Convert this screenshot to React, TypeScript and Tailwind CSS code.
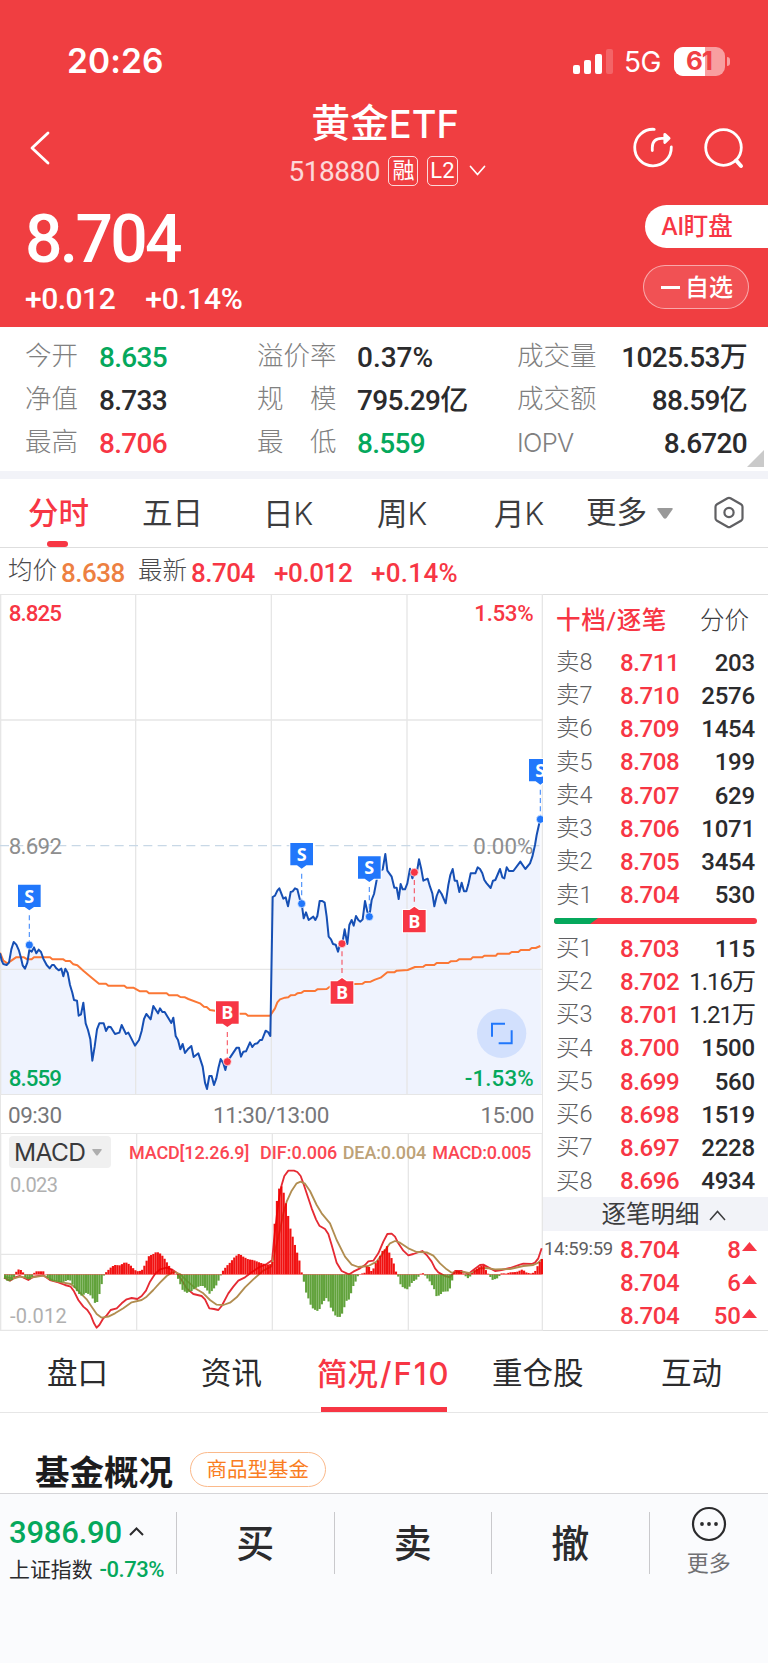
import React from 'react';
import clsx from 'clsx';

type Point = [number, number];

const RED = '#f73644';
const BLUE = '#2177fb';

// chart coordinates are in 1/3 px
const AFTERNOON_X = 780;
const MACD_AFTERNOON_X = 750;

const shift = (points: Point[], dx: number): Point[] => points.map(([x, y]) => [x + dx, y]);
const toPoints = (points: Point[]) => points.map((p) => p.join(',')).join(' ');

const parse = (data: string): Point[] =>
  data.trim().split(/\s+/).map((pair) => pair.split(',').map(Number) as Point);

const price: Point[] = [
  ...parse(`0,1090 5,1112 10,1122 20,1125 27,1118 34,1078 41,1056 49,1064 57,1082 63,1104 68,1126 75,1136 82,1118 88,1080
    95,1085 102,1072 109,1090 116,1079 123,1086 130,1106 140,1125 149,1135 156,1125 162,1125 169,1135 176,1141 184,1136
    190,1159 196,1136 203,1148 210,1185 217,1208 222,1230 231,1232 236,1277 243,1273 250,1238 257,1300 264,1320 271,1348
    277,1412 284,1370 291,1318 298,1300 311,1300 318,1323 325,1310 332,1311 345,1332 358,1328 365,1305 378,1332 385,1328
    405,1367 417,1350 425,1323 432,1287 439,1272 452,1288 460,1248 474,1270 480,1255 487,1266 494,1266 514,1299 520,1283
    527,1338 534,1350 541,1378 548,1362 555,1389 565,1376 574,1368 581,1401 595,1390 608,1430 615,1478 621,1497 628,1458
    635,1458 642,1485 649,1465 655,1435 662,1407 670,1420 676,1440 682,1415 692,1400 710,1373 717,1373 723,1400 730,1385
    738,1384 750,1357 757,1371 764,1362 772,1360 780,1350 786,1350 797,1322 804,1326 811,1338`),
  ...shift(
    parse(`38,921 45,917 52,902 58,895 70,926 77,922 84,949 92,906 98,904 105,895 112,898 120,930 125,941 131,985 138,967
      146,990 160,980 166,990 172,978 179,933 187,933 194,938 200,980 206,1040 213,1048 219,1062 227,1064 234,1085
      240,1062 247,1060 254,1018 262,1062 268,1005 275,990 281,1007 288,978 295,990 301,995 308,988 315,933 322,965
      328,980 335,930 342,912 350,870 356,845 368,838 376,792 382,842 395,860 403,893 410,893 416,927 422,882 428,898
      435,898 442,880 450,836 457,865 463,847 470,850 477,808 484,838 490,872 503,866 510,890 517,910 523,949 530,918
      537,900 545,912 557,940 565,885 571,855 578,837 584,872 591,872 598,906 605,878 612,904 619,904 625,883 632,850
      646,850 653,832 660,837 667,850 673,870 680,880 692,894 699,872 706,870 720,837 727,862 733,865 740,832 747,843
      760,843 781,815 796,837 810,820 817,800 825,765 830,735 836,708 841,688`),
    AFTERNOON_X,
  ),
];

const average: Point[] = [
  ...parse(`0,1088 10,1112 22,1120 34,1112 48,1102 72,1102 82,1108 95,1108 102,1102 150,1102 157,1108 190,1108 197,1113
    210,1113 220,1123 232,1126 250,1142 275,1163 297,1181 318,1181 325,1187 373,1187 380,1193 400,1193 420,1204 440,1204
    447,1210 500,1210 507,1216 533,1216 541,1221 555,1222 565,1227 600,1240 612,1250 620,1251 630,1260 645,1262
    720,1271 737,1271 744,1277 811,1277`),
  ...shift(
    parse(`35,1270 45,1255 52,1237 60,1228 75,1223 85,1222 92,1216 105,1215 112,1210 125,1208 132,1203 165,1203 172,1198
      200,1197 210,1190 285,1182 308,1181 315,1176 332,1175 345,1169 362,1163 382,1147 403,1147 410,1142 443,1140
      465,1131 490,1130 497,1125 523,1125 530,1119 565,1119 572,1114 590,1113 597,1108 632,1108 638,1102 667,1102
      673,1097 708,1097 713,1091 748,1091 755,1086 775,1086 782,1080 808,1080 815,1074 827,1074 841,1068`),
    AFTERNOON_X,
  ),
];

const histogram: Point[] = [
  ...parse(`12,563 20,572 30,574 40,568 46,550 52,541 58,537 64,541 70,548 76,562 86,571 95,563 100,553 106,544 118,544
    130,544 136,552 145,566 152,572 165,574 185,577 195,574 205,570 212,572 220,588 230,602 240,615 248,618 256,608
    270,614 280,628 288,645 295,628 300,605 308,570 313,553 320,545 335,530 345,525 360,526 376,516 390,524 400,535
    410,544 425,542 432,530 440,512 447,498 460,492 470,485 480,490 490,500 500,516 512,535 522,545 530,556 540,580
    548,600 560,609 575,603 585,595 600,588 610,588 620,598 628,612 640,598 650,585 660,562 667,545 680,528 690,518
    705,500 718,491 730,500 745,508 760,510 780,518 800,524 813,522`),
  ...shift(
    parse(`68,515 74,403 81,332 87,297 93,286 100,303 107,335 113,368 120,411 127,436 134,462 141,486 148,510 155,547
      162,576 169,610 176,627 183,647 190,657 203,663 210,656 217,640 229,624 237,636 243,654 250,665 257,678 268,683
      276,672 283,652 290,632 298,628 305,604 312,582 318,573 325,555 331,552 345,548 350,530 358,531 364,543 371,535
      378,518 385,510 392,495 398,482 405,478 411,468 418,488 425,505 432,522 439,548 446,562 453,588 466,596 473,598
      480,588 487,576 500,568 508,557 514,549 521,550 528,560 540,575 553,598 560,620 570,615 580,605 597,604 605,580
      611,548 620,542 632,544 640,550 648,560 656,566 665,553 672,542 690,530 700,524 710,545 718,556 727,570 745,564
      751,553 758,548 765,552 780,547 800,546 818,538 828,547 845,551 855,545 863,528 875,505`),
    MACD_AFTERNOON_X,
  ),
];

const dif: Point[] = [
  ...parse(`12,563 30,572 45,562 60,558 85,570 100,560 130,556 150,570 175,577 195,585 212,590 222,604 235,630 250,650
    262,660 272,675 282,700 290,713 298,705 310,685 320,676 332,660 350,655 365,640 380,628 395,624 412,627 425,618
    438,602 450,575 465,552 480,538 500,533 515,538 530,548 545,570 560,595 580,612 605,618 615,628 628,655 642,657
    655,660 665,648 685,610 700,590 715,572 735,562 755,547 775,533 800,522 814,512`),
  ...shift(
    parse(`66,513 72,450 80,380 88,320 95,285 103,258 115,242 132,242 142,246 152,258 160,280 170,310 185,355 198,388
      208,407 225,417 235,432 245,465 260,518 275,543 290,550 298,553 310,545 330,535 345,525 355,514 370,512 385,490
      400,455 412,432 425,431 435,440 445,460 460,482 475,496 490,492 517,483 530,495 545,515 555,535 565,547 585,558
      600,562 615,543 635,543 655,552 670,540 690,525 700,524 715,532 735,543 755,540 780,534 810,524 820,521 845,522
      855,518 865,505 875,475`),
    MACD_AFTERNOON_X,
  ),
];

const dea: Point[] = [
  ...parse(`12,560 40,566 60,560 85,564 130,557 160,572 190,578 212,582 225,592 240,608 260,628 275,650 290,672 305,683
    325,680 345,670 370,655 395,637 425,630 440,620 460,600 480,578 500,558 520,545 540,552 560,572 590,598 610,610
    630,630 650,644 670,645 690,638 710,622 735,592 760,568 790,542 813,530`),
  ...shift(
    parse(`66,522 90,420 100,370 110,335 125,302 140,280 152,275 165,281 180,303 200,345 215,370 240,400 260,450 285,500
      305,524 325,531 355,528 380,515 400,488 420,460 435,453 450,458 475,475 500,486 530,487 550,497 570,520 590,538
      605,548 640,546 665,550 690,535 710,534 735,538 780,537 820,528 850,525 865,518 875,508`),
    MACD_AFTERNOON_X,
  ),
];

const BAR_STEP = 6.74;
const ZERO = 553;

const valueAt = (points: Point[], x: number) => {
  const i = Math.max(1, points.findIndex(([px]) => px >= x));
  const [x0, y0] = points[i - 1];
  const [x1, y1] = points[i];
  return y0 + ((y1 - y0) * (x - x0)) / (x1 - x0);
};

const bars = Array.from({ length: 240 }, (_, i) => {
  const x = 12 + i * BAR_STEP;
  return { x, y: valueAt(histogram, Math.min(x + BAR_STEP / 2, 1624)) };
});

const markers = [
  { type: 'S', x: 88, box: 884, dot: 1065 },
  { type: 'B', x: 682, box: 1234, dot: 1415 },
  { type: 'S', x: 905, box: 759, dot: 941 },
  { type: 'B', x: 1026, box: 1174, dot: 1061 },
  { type: 'S', x: 1108, box: 799, dot: 980 },
  { type: 'B', x: 1243, box: 960, dot: 847 },
  { type: 'S', x: 1621, box: 507, dot: 688 },
];

const asks = [
  ['卖8', '8.711', '203'],
  ['卖7', '8.710', '2576'],
  ['卖6', '8.709', '1454'],
  ['卖5', '8.708', '199'],
  ['卖4', '8.707', '629'],
  ['卖3', '8.706', '1071'],
  ['卖2', '8.705', '3454'],
  ['卖1', '8.704', '530'],
];

const bids = [
  ['买1', '8.703', '115'],
  ['买2', '8.702', '1.16万'],
  ['买3', '8.701', '1.21万'],
  ['买4', '8.700', '1500'],
  ['买5', '8.699', '560'],
  ['买6', '8.698', '1519'],
  ['买7', '8.697', '2228'],
  ['买8', '8.696', '4934'],
];

const trades = [
  ['14:59:59', '8.704', '8'],
  ['', '8.704', '6'],
  ['', '8.704', '50'],
];

const stats = [
  { rows: [['今开', '8.635', 'text-[#05a85c]'], ['净值', '8.733', 'text-[#2b2b2d]'], ['最高', '8.706', 'text-[#f73644]']] },
  { rows: [['溢价率', '0.37%', 'text-[#2b2b2d]'], ['规　模', '795.29亿', 'text-[#2b2b2d]'], ['最　低', '8.559', 'text-[#05a85c]']] },
  { rows: [['成交量', '1025.53万', 'text-[#2b2b2d]'], ['成交额', '88.59亿', 'text-[#2b2b2d]'], ['IOPV', '8.6720', 'text-[#2b2b2d]']] },
];

const StatusBar = () => (
  <div className="flex h-[94px] items-center pt-[28px] pr-[38px] pl-[67px] text-white">
    <span className="pt-px font-['Inter',sans-serif] text-[33.500px] leading-none font-semibold tracking-[0.1px]">20:26</span>
    <svg className="ml-auto" width="40" height="25" viewBox="0 0 40 25" fill="#fff">
      <rect x="0" y="16" width="7" height="9" rx="2" />
      <rect x="11" y="11" width="7" height="14" rx="2" />
      <rect x="22" y="5" width="7" height="20" rx="2" />
      <rect x="33" y="0" width="7" height="25" rx="2" opacity="0.2" />
    </svg>
    <span className="ml-[11px] w-[39px] pt-px font-['Inter',sans-serif] text-[28px] leading-none tracking-[-0.5px]">5G</span>
    <div className="relative ml-[11px] flex h-[29px] w-[51px] items-center justify-center overflow-hidden rounded-[9px] bg-white/50">
      <div className="absolute inset-y-0 left-0 w-[31px] bg-white" />
      <span className="relative mr-px font-['Inter',sans-serif] text-[26px] leading-none font-bold tracking-[-1px] text-[#f04044]">61</span>
    </div>
    <div className="ml-[2px] h-[9px] w-[3px] rounded-r-full bg-white/50" />
  </div>
);

const TitleBar = () => (
  <div className="flex h-[106px] items-start justify-between pr-[24px] pl-[29px] text-white">
    <svg className="mt-[37px]" width="22" height="34" viewBox="0 0 22 34" fill="none" stroke="#fff" strokeWidth="2.8" strokeLinecap="round" strokeLinejoin="round">
      <path d="M19 2L3 17l16 15" />
    </svg>
    <div className="ml-[86px] flex w-[240px] flex-col items-center">
      <div className="mt-[8px] flex items-center text-[38.800px] leading-[44px] font-medium whitespace-nowrap">
        黄金<span className="font-['Inter',sans-serif] text-[38px]">ETF</span>
      </div>
      <div className="mt-[8px] ml-[5px] flex items-center gap-[8.500px]">
        <span className="pt-[2px] text-[28px] leading-[32px] tracking-[-0.5px] text-white/80">518880</span>
        <span className="flex h-[30px] w-[30px] items-center justify-center rounded-[5px] border-[1.5px] border-white/80 text-[22px] leading-none">融</span>
        <span className="flex h-[30px] w-[31px] items-center justify-center rounded-[5px] border-[1.5px] border-white/80 text-[22px] leading-none">L2</span>
        <svg className="ml-[3px]" width="17" height="12" viewBox="0 0 17 12" fill="none" stroke="#fff" strokeWidth="1.7" strokeLinecap="round" strokeLinejoin="round">
          <path d="M1.5 1.5l7 8 7-8" />
        </svg>
      </div>
    </div>
    <div className="mt-[33px] flex gap-[28px]">
      <svg width="41" height="42" viewBox="0 0 41 42" fill="none" stroke="#fff" strokeWidth="2.8" strokeLinecap="round" strokeLinejoin="round">
        <path d="M21.200 2.300A18.300 18.300 0 1 0 38.300 20" />
        <path d="M19.300 23.500v-3q0-9.200 9.500-9.200h6M31.800 7.300l4.300 3.900-4.300 4.200z" />
      </svg>
      <svg width="42" height="42" viewBox="0 0 42 42" fill="none" stroke="#fff" strokeWidth="2.8" strokeLinecap="round">
        <circle cx="21.500" cy="20.500" r="17.800" />
        <path d="M34.200 33.500l4.800 5.500" strokeWidth="4" />
      </svg>
    </div>
  </div>
);

const Quote = () => (
  <div className="flex h-[128px] justify-between pl-[25px] text-white">
    <div className="pt-[6px]">
      <div className="text-[66px] leading-[68px] font-medium tracking-[-2.7px]">8.704</div>
      <div className="mt-[7px] flex gap-[30px] text-[30px] leading-[36px] font-medium tracking-[-0.5px]">
        <span>+0.012</span>
        <span className="tracking-[-0.1px]">+0.14%</span>
      </div>
    </div>
    <div className="flex flex-col items-end gap-[17px] pt-[5px]">
      <div className="flex h-[43px] w-[123px] items-center rounded-l-full bg-white pt-px pl-[16px] text-[24.500px] leading-none font-medium text-[#f73644]">
        <span className="font-['Inter',sans-serif] text-[24px] tracking-[-0.4px]">AI</span>盯盘
      </div>
      <div className="mr-[19px] flex h-[44px] w-[106px] items-center rounded-full border-[1.5px] border-white/50 bg-white/10 pt-px pl-[17px] text-[24px] leading-none font-medium">
        <span className="mr-[5px] h-[2.500px] w-[19px] bg-white" />
        自选
      </div>
    </div>
  </div>
);

const Stats = () => (
  <div className="relative flex h-[144px] bg-white pt-[8px] pr-[21px] pl-[25px]">
    {stats.map(({ rows }, col) => (
      <div key={col} className={clsx(col === 0 && 'w-[232px]', col === 1 && 'w-[260px]', col === 2 && 'flex-1')}>
        {rows.map(([label, value, color]) => (
          <div key={label} className={clsx('flex h-[43px] items-center', col === 2 && 'justify-between')}>
            <span
              className={clsx(
                'leading-none font-light text-[#808080]',
                label === 'IOPV' ? "font-['Inter',sans-serif] text-[25.500px] tracking-[-0.7px]" : 'text-[26.500px]',
                col === 0 && 'w-[74px]',
                col === 1 && 'w-[100px]',
              )}
            >
              {label}
            </span>
            <span className={clsx('pt-[2px] text-[28px] leading-none font-medium', value.endsWith('%') ? 'tracking-[0px]' : 'tracking-[-0.7px]', color)}>
              {value}
            </span>
          </div>
        ))}
      </div>
    ))}
    <svg className="absolute right-[4px] bottom-[4px]" width="17" height="17" viewBox="0 0 17 17">
      <path d="M17 0v17H0z" fill="#cacaca" />
    </svg>
  </div>
);

const PeriodTabs = () => (
  <div className="flex h-[69px] border-b-[1.500px] border-[#dedede] bg-white pl-[28px] text-[30.500px] leading-[70px] text-[#3c3c3e]">
    <div className="relative w-[114px] font-medium text-[#f73644]">
      分时
      <span className="absolute bottom-0 left-[19px] h-[6px] w-[21px] rounded-[3px] bg-[#f73644]" />
    </div>
    <div className="w-[121px]">五日</div>
    <div className="w-[114px]">日<span className="font-['Inter',sans-serif] font-light">K</span></div>
    <div className="w-[117px]">周<span className="font-['Inter',sans-serif] font-light">K</span></div>
    <div className="w-[92px]">月<span className="font-['Inter',sans-serif] font-light">K</span></div>
    <div className="flex w-[128px] items-center">
      更多
      <svg className="ml-[10px]" width="16" height="11" viewBox="0 0 16 11">
        <path d="M1.500 0h13q2 0 1 1.500l-6 8.500q-1.500 1.500-3 0l-6-8.500q-1-1.500 1-1.500z" fill="#999" />
      </svg>
    </div>
    <svg className="mt-[17px]" width="30" height="33" viewBox="0 0 30 33" fill="none" stroke="#606063" strokeWidth="2.200" strokeLinejoin="round">
      <path d="M13.500 2.200q1.500-.8 3 0l10.500 6q1.500.9 1.500 2.600v11.400q0 1.700-1.500 2.600l-10.500 6q-1.500.8-3 0l-10.500-6q-1.500-.9-1.500-2.600V10.800q0-1.700 1.500-2.600z" />
      <circle cx="15" cy="16.500" r="4.600" />
    </svg>
  </div>
);

const PriceSummary = () => (
  <div className="flex h-[46px] items-center bg-white pt-px pl-[8px] text-[26px] leading-none font-medium tracking-[-0.5px] text-[#f73644]">
    <span className="w-[53px] text-[24.500px] font-light tracking-normal text-[#4a4a4c]">均价</span>
    <span className="w-[77px] pt-[2px] text-[#ed8041]">8.638</span>
    <span className="w-[53px] text-[24.500px] font-light tracking-normal text-[#4a4a4c]">最新</span>
    <span className="w-[83px] pt-[2px]">8.704</span>
    <span className="w-[97px] pt-[2px] tracking-[-0.4px]">+0.012</span>
    <span className="pt-[2px] tracking-[0.3px]">+0.14%</span>
  </div>
);

const Marker: React.FC<{ type: string; x: number; box: number; dot: number }> = ({ type, x, box, dot }) => {
  const color = type === 'S' ? BLUE : RED;
  const above = box < dot;
  const edge = above ? box + 67 : box;
  const tip = above ? edge + 10 : edge - 10;

  return (
    <g>
      <line x1={x} x2={x} y1={above ? tip + 15 : tip - 15} y2={dot} stroke={color} strokeWidth="3.500" strokeDasharray="15 10" opacity="0.8" />
      <path
        d={`M${x - 34} ${box}h68v67h-68zM${x - 14} ${edge}L${x} ${tip}L${x + 14} ${edge}z`}
        fill={color}
        stroke="#fff"
        strokeWidth="6"
        paintOrder="stroke"
      />
      <circle cx={x} cy={dot} r="12" fill={color} stroke="#fff" strokeWidth="2" />
      <text x={x} y={box + 54} textAnchor="middle" fontSize="54" fontWeight="700" fill="#fff" className="font-['Open_Sans',sans-serif]">
        {type}
      </text>
    </g>
  );
};

const PriceChart = () => (
  <svg className="block" width="543" height="501" viewBox="0 12 1629 1503">
    <polygon points={`0,1515 ${toPoints(price)} 1623,1515`} fill="#eff3fe" />
    <g stroke="#e6e6e6" strokeWidth="4">
      <path d="M2 12V1515M407 12V1515M814 12V1515M1221 12V1515M1627 12V1515" />
      <path d="M0 13H1629M0 390H1629M0 1138H1629M0 1514H1629" />
    </g>
    <path d="M0 767H1629" stroke="#c8d8e6" strokeWidth="4" strokeDasharray="27 16" />
    <g fontSize="67" className="font-['Roboto',sans-serif]">
      <text x="26" y="93" fill={RED} textLength="160" className="font-medium">8.825</text>
      <text x="1423" y="93" fill={RED} textLength="178" className="font-medium">1.53%</text>
      <text x="26" y="791" fill="#8e8e8e" textLength="160">8.692</text>
      <text x="1420" y="791" fill="#8e8e8e" textLength="180">0.00%</text>
      <text x="26" y="1487" fill="#05a85c" textLength="160" className="font-medium">8.559</text>
      <text x="1394" y="1487" fill="#05a85c" textLength="207" className="font-medium">-1.53%</text>
    </g>
    <polyline points={toPoints(average)} fill="none" stroke="#fb7735" strokeWidth="6" strokeLinejoin="round" />
    <polyline points={toPoints(price)} fill="none" stroke="#164fb4" strokeWidth="6" strokeLinejoin="round" />
    {markers.map((m) => (
      <Marker key={m.x} {...m} />
    ))}
    <circle cx="1505" cy="1330" r="74" fill="#d2e0fd" />
    <path d="M1515 1301h-39v39M1496 1360h39v-39" fill="none" stroke={BLUE} strokeWidth="6" />
  </svg>
);

const TimeAxis = () => (
  <div className="flex h-[38px] items-center justify-between border-x-[1.500px] border-[#e6e6e6] pt-[2px] pr-[8px] pl-[7px] text-[22.500px] leading-none tracking-[-0.5px] text-[#77777a]">
    <span>09:30</span>
    <span>11:30/13:00</span>
    <span>15:00</span>
  </div>
);

const MacdChart = () => (
  <div className="relative h-[198px]">
    <svg className="block" width="543" height="198" viewBox="0 129 1629 594">
      <g stroke="#e6e6e6" strokeWidth="4" fill="none">
        <path d="M2 129V723M410 129V723M817 129V723M1225 129V723M1627 129V723M0 130H1629M0 493H1629M0 721H1629" />
      </g>
      <g fontSize="60" className="font-['Roboto',sans-serif]">
        <text x="30" y="305" fill="#b0b0b0" textLength="144">0.023</text>
        <text x="30" y="698" fill="#b0b0b0" textLength="170">-0.012</text>
      </g>
      <g fontSize="54" className="font-['Roboto',sans-serif] font-medium" fill="#fb4652">
        <text x="387" y="208" textLength="361">MACD[12.26.9]</text>
        <text x="780" y="208" textLength="232">DIF:0.006</text>
        <text x="1028" y="208" fill="#bda277" textLength="251">DEA:0.004</text>
        <text x="1297" y="208" textLength="297">MACD:0.005</text>
      </g>
      <polyline points={toPoints(dif)} fill="none" stroke="#e52a33" strokeWidth="5.500" strokeLinejoin="round" />
      <polyline points={toPoints(dea)} fill="none" stroke="#b18d50" strokeWidth="5.500" strokeLinejoin="round" />
      {bars.map(({ x, y }) => (
        <rect
          key={x}
          x={x}
          y={Math.min(y, ZERO)}
          width="6.500"
          height={Math.abs(y - ZERO)}
          fill={y < ZERO ? '#f00000' : '#559b2c'}
          opacity="0.93"
        />
      ))}
      <path d={`M12 ${ZERO}H1625`} stroke="#f00000" strokeWidth="2" opacity="0.6" />
    </svg>
    <div className="absolute top-[3px] left-[9px] flex h-[32px] w-[102px] items-center rounded-[4px] bg-[#f0f0f0] pl-[5px] font-['Inter',sans-serif] text-[24.500px] leading-none tracking-[-0.6px] text-[#3a3a3c]">
      MACD
      <svg className="ml-auto mr-[9px]" width="10" height="7" viewBox="0 0 10 7">
        <path d="M1 0h8q1.500 0 .5 1.200l-3.500 4.800q-1 1-2 0L.5 1.200Q-.5 0 1 0z" fill="#aeaeae" />
      </svg>
    </div>
  </div>
);

const OrderRow: React.FC<{ row: string[] }> = ({ row: [label, level, volume] }) => (
  <div className="flex h-[33.250px] shrink-0 items-center pr-[13px] pl-[13px] text-[24px] leading-none font-medium">
    <span className="w-[64px] text-[23.500px] font-light text-[#5f5f62]">{label}</span>
    <span className="tracking-[-0.4px] text-[#f73644]">{level}</span>
    <span className={clsx('ml-auto text-[#2b2b2d]', volume.endsWith('万') ? 'font-normal tracking-[-1px]' : 'tracking-[-0.2px]')}>{volume}</span>
  </div>
);

const OrderBook = () => (
  <div className="flex flex-1 flex-col overflow-hidden border-t-[1.500px] border-b-[1.500px] border-[#dedede]">
    <div className="flex h-[51px] shrink-0 items-center justify-between pt-px pr-[19px] pl-[13px] text-[24.500px] leading-none">
      <span className="font-medium tracking-[0.7px] text-[#f73644]">十档/逐笔</span>
      <span className="font-light text-[#3c3c3e]">分价</span>
    </div>
    {asks.map((row) => (
      <OrderRow key={row[0]} row={row} />
    ))}
    <div className="flex h-[20px] shrink-0 items-center px-[11px] pb-[2px]">
      <svg width="203" height="6" viewBox="0 0 203 6">
        <rect width="203" height="6" rx="3" fill={RED} />
        <path d="M3 0h41l-8 6H3a3 3 0 0 1 0-6z" fill="#05a85c" />
      </svg>
    </div>
    {bids.map((row) => (
      <OrderRow key={row[0]} row={row} />
    ))}
    <div className="-mt-px flex h-[34px] shrink-0 items-center justify-center bg-[#f2f3f8] pt-[2px] pl-[16px] text-[24.500px] leading-none text-[#3c3c3e]">
      逐笔明细
      <svg className="ml-[9px]" width="17" height="11" viewBox="0 0 17 11" fill="none" stroke="#3c3c3e" strokeWidth="1.500">
        <path d="M1 10l7.500-8.500L16 10" />
      </svg>
    </div>
    <div className="h-[98px] shrink-0 pt-[2px]">
      {trades.map(([time, level, volume], i) => (
        <div key={i} className="flex h-[33.250px] items-center pr-[11px] text-[24px] leading-none font-medium text-[#f73644]">
          <span className="w-[77px] pl-[1px] text-[18.500px] font-normal tracking-[-0.3px] text-[#5f5f62]">{time}</span>
          <span className="tracking-[-0.4px]">{level}</span>
          <span className="ml-auto">{volume}</span>
          <svg className="mb-[6px] ml-[1px]" width="15" height="9" viewBox="0 0 15 9">
            <path d="M7.500 0L15 9H0z" fill={RED} />
          </svg>
        </div>
      ))}
    </div>
  </div>
);

const SectionTabs = () => (
  <div className="flex h-[82px] border-b-[1.500px] border-[#e6e6e6] bg-white pl-[47px] text-[30.500px] leading-[85px] text-[#2b2b2d]">
    <div className="w-[154px]">盘口</div>
    <div className="w-[116px]">资讯</div>
    <div className="relative w-[175px] font-medium whitespace-nowrap text-[#f73644]">
      简况<span className="ml-[2px] font-['Inter',sans-serif] text-[31px] tracking-[2px]">/F10</span>
      <span className="absolute bottom-0 left-[4px] h-[5px] w-[126px] bg-[#f73644]" />
    </div>
    <div className="w-[169px]">重仓股</div>
    <div>互动</div>
  </div>
);

const BottomBar = () => (
  <div className="flex h-[170px] border-t-[1.500px] border-[#d5d5d8] bg-[#fafbfd] pt-[18px]">
    <div className="w-[176px] pl-[9px]">
      <div className="mt-[3px] flex items-center gap-[7px] text-[31px] leading-[36px] tracking-[-0.2px] text-[#05a85c]">
        <span className="font-medium">3986.90</span>
        <svg className="mb-[4px]" width="15" height="9" viewBox="0 0 15 9" fill="none" stroke="#2b2b2d" strokeWidth="2">
          <path d="M1 8l6.500-6.500L14 8" />
        </svg>
      </div>
      <div className="mt-[4px] flex items-center gap-[7px] text-[20.900px] leading-[28px] whitespace-nowrap text-[#2b2b2d]">
        上证指数
        <span className="pt-[1px] text-[22px] font-medium tracking-[-0.5px] text-[#05a85c]">-0.73%</span>
      </div>
    </div>
    {['买', '卖', '撤'].map((action) => (
      <div key={action} className="flex h-[62px] w-[157.500px] items-center justify-center border-l-[1.500px] border-[#c9c9cc] pt-[2px] text-[38px] leading-none font-medium text-[#2b2b2d]">
        {action}
      </div>
    ))}
    <div className="flex h-[62px] flex-1 flex-col items-center border-l-[1.500px] border-[#c9c9cc]">
      <svg className="mt-[-6px] shrink-0" width="36" height="36" viewBox="0 0 36 36">
        <circle cx="18" cy="18" r="16" fill="none" stroke="#2b2b2d" strokeWidth="2.200" />
        <circle cx="11" cy="18" r="1.900" fill="#2b2b2d" />
        <circle cx="18" cy="18" r="1.900" fill="#2b2b2d" />
        <circle cx="25" cy="18" r="1.900" fill="#2b2b2d" />
      </svg>
      <span className="mt-[11px] text-[22px] leading-none text-[#707073]">更多</span>
    </div>
  </div>
);

const App: React.FC = () => {
  return (
    <div className="h-[1663px] w-[768px] overflow-hidden bg-white font-['Roboto','Noto_Sans_CJK_SC',sans-serif]">
      <header className="h-[327px] bg-[#f03e41]">
        <StatusBar />
        <TitleBar />
        <Quote />
      </header>
      <Stats />
      <div className="h-[8px] bg-[#f2f3f8]" />
      <PeriodTabs />
      <PriceSummary />

      <div className="flex h-[737px]">
        <div className="w-[543px]">
          <PriceChart />
          <TimeAxis />
          <MacdChart />
        </div>
        <OrderBook />
      </div>

      <SectionTabs />

      {/* Fund overview */}
      <div className="flex h-[80px] items-start pt-[39px] pl-[35px]">
        <h2 className="text-[34.500px] leading-[42px] font-bold text-[#1c1c1e]">基金概况</h2>
        <span className="ml-[17px] flex h-[35px] items-center rounded-full border-[1.500px] border-[#fbb98a] px-[15.500px] pt-px text-[20.500px] leading-none text-[#fa7d22]">
          商品型基金
        </span>
      </div>

      <BottomBar />
    </div>
  );
};

export default App;
